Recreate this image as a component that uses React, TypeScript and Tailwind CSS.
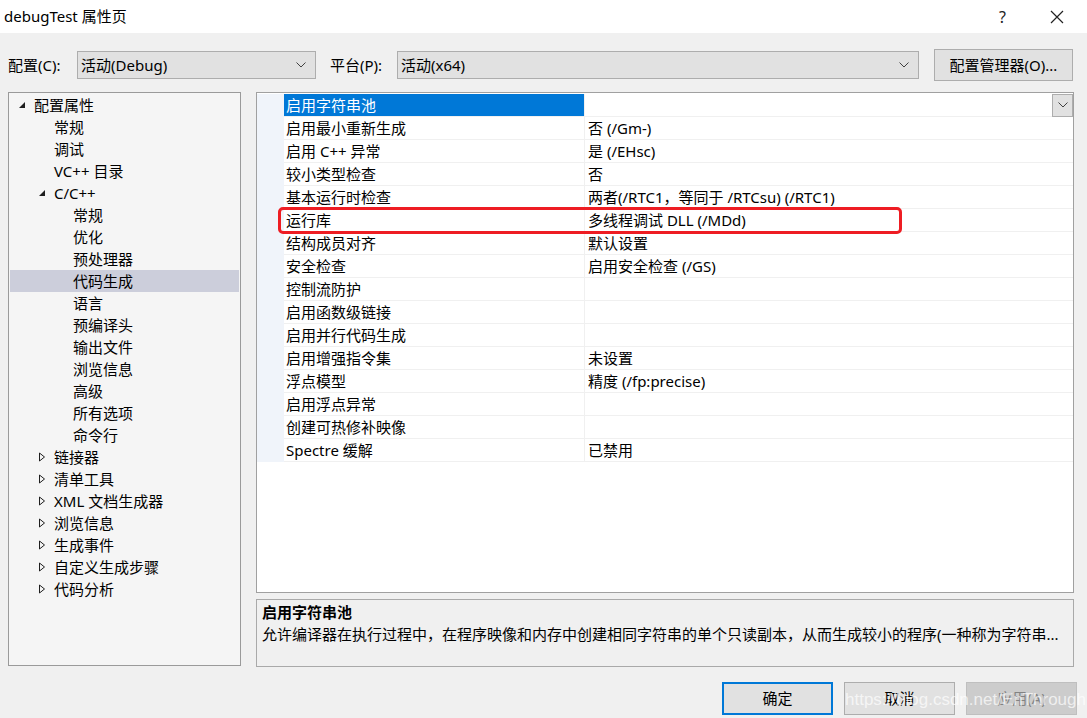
import React from 'react';

const font = "font-['Noto_Sans','Noto_Sans_CJK_SC',sans-serif]";

type TreeItem = { label: string; level: number; state?: 'open' | 'closed'; selected?: boolean };

const tree: TreeItem[] = [
  { label: '配置属性', level: 0, state: 'open' },
  { label: '常规', level: 1 },
  { label: '调试', level: 1 },
  { label: 'VC++ 目录', level: 1 },
  { label: 'C/C++', level: 1, state: 'open' },
  { label: '常规', level: 2 },
  { label: '优化', level: 2 },
  { label: '预处理器', level: 2 },
  { label: '代码生成', level: 2, selected: true },
  { label: '语言', level: 2 },
  { label: '预编译头', level: 2 },
  { label: '输出文件', level: 2 },
  { label: '浏览信息', level: 2 },
  { label: '高级', level: 2 },
  { label: '所有选项', level: 2 },
  { label: '命令行', level: 2 },
  { label: '链接器', level: 1, state: 'closed' },
  { label: '清单工具', level: 1, state: 'closed' },
  { label: 'XML 文档生成器', level: 1, state: 'closed' },
  { label: '浏览信息', level: 1, state: 'closed' },
  { label: '生成事件', level: 1, state: 'closed' },
  { label: '自定义生成步骤', level: 1, state: 'closed' },
  { label: '代码分析', level: 1, state: 'closed' },
];

const props: [string, string][] = [
  ['启用字符串池', ''],
  ['启用最小重新生成', '否 (/Gm-)'],
  ['启用 C++ 异常', '是 (/EHsc)'],
  ['较小类型检查', '否'],
  ['基本运行时检查', '两者(/RTC1，等同于 /RTCsu) (/RTC1)'],
  ['运行库', '多线程调试 DLL (/MDd)'],
  ['结构成员对齐', '默认设置'],
  ['安全检查', '启用安全检查 (/GS)'],
  ['控制流防护', ''],
  ['启用函数级链接', ''],
  ['启用并行代码生成', ''],
  ['启用增强指令集', '未设置'],
  ['浮点模型', '精度 (/fp:precise)'],
  ['启用浮点异常', ''],
  ['创建可热修补映像', ''],
  ['Spectre 缓解', '已禁用'],
];

const Chevron = () => (
  <svg width="10" height="6" viewBox="0 0 10 6" className="shrink-0">
    <path d="M0.5 0.5 L5 5 L9.5 0.5" fill="none" stroke="#404040" strokeWidth="1" />
  </svg>
);

const Expander = ({ state }: { state?: 'open' | 'closed' }) => {
  if (state === 'open')
    return (
      <svg width="8" height="8" viewBox="0 0 8 8">
        <path d="M7 1 L7 7 L1 7 Z" fill="#1e1e1e" />
      </svg>
    );
  if (state === 'closed')
    return (
      <svg width="8" height="10" viewBox="0 0 8 10">
        <path d="M1.5 1 L6.5 5 L1.5 9 Z" fill="none" stroke="#1e1e1e" strokeWidth="1" />
      </svg>
    );
  return null;
};

const Combo = ({ text, className }: { text: string; className: string }) => (
  <div className={`h-[28px] bg-[#e1e1e1] border border-[#adadad] flex items-center justify-between pl-[3px] pr-[9px] ${className}`}>
    <span>{text}</span>
    <Chevron />
  </div>
);

export default function App() {
  return (
    <div className={`w-[1087px] h-[718px] bg-[#f0f0f0] text-[15px] text-black flex flex-col overflow-hidden ${font}`}>
      {/* title bar */}
      <div className="h-[33px] bg-white flex items-center pl-[4px] shrink-0">
        <span className="flex-1">debugTest 属性页</span>
        <span className="text-[16px] mr-[44px] text-[#222]">?</span>
        <svg width="14" height="14" viewBox="0 0 14 14" className="mr-[23px]">
          <path d="M1 1 L13 13 M13 1 L1 13" stroke="#222" strokeWidth="1.2" />
        </svg>
      </div>

      {/* configuration row */}
      <div className="flex items-center mt-[16px] pl-[8px] h-[32px] shrink-0">
        <span className="w-[69px]">配置(C):</span>
        <Combo text="活动(Debug)" className="w-[239px]" />
        <span className="ml-[14px] w-[67px]">平台(P):</span>
        <Combo text="活动(x64)" className="w-[522px]" />
        <div className="ml-[15px] w-[139px] h-[32px] bg-[#e1e1e1] border border-[#adadad] flex items-center justify-center">
          配置管理器(O)...
        </div>
      </div>

      {/* main area */}
      <div className="flex mt-[11px] pl-[8px] gap-[15px] h-[575px] shrink-0">
        <div className="w-[233px] h-[574px] bg-[#f5f5f5] border border-[#9a9a9a] pt-[1px] px-[1px]">
          {tree.map((t, i) => (
            <div
              key={i}
              className={`h-[22px] flex items-center ${t.selected ? 'bg-[#cccedb]' : ''}`}
            >
              <div
                className={`w-[9px] flex justify-start ${t.level === 0 ? 'ml-[8px]' : t.level === 1 ? 'ml-[28px]' : 'ml-[47px]'}`}
              >
                <Expander state={t.state} />
              </div>
              <span className="ml-[7px]">{t.label}</span>
            </div>
          ))}
        </div>

        <div className="w-[818px] flex flex-col gap-[6px]">
          <div className="relative h-[501px] bg-white border border-[#a0a0a0] pt-[1px]">
            {props.map(([name, value], i) => (
              <div key={i} className="flex h-[23px]">
                <div className="w-[27px] bg-[#f0f4fa]" />
                <div
                  className={`w-[301px] border-b border-r border-[#f0f0f0] flex items-center pl-[2px] ${i === 0 ? 'bg-[#0078d7] text-white border-[#0078d7]' : ''}`}
                >
                  {name}
                </div>
                <div className="flex-1 border-b border-[#f0f0f0] flex items-center pl-[3px] justify-between">
                  <span>{value}</span>
                  {i === 0 && (
                    <div className="w-[21px] h-[23px] bg-[#e1e1e1] border border-[#adadad] flex items-center justify-center">
                      <Chevron />
                    </div>
                  )}
                </div>
              </div>
            ))}
            <div className="absolute left-[21px] top-[114px] w-[624px] h-[27px] border-[3px] border-[#ee1d23] rounded-[5px]" />
          </div>

          <div className="h-[68px] bg-[#f0f0f0] border border-[#a9a9a9] px-[5px] pt-[1px]">
            <div className="font-bold h-[22px] flex items-center">启用字符串池</div>
            <div className="h-[23px] flex items-center whitespace-nowrap overflow-hidden">
              允许编译器在执行过程中，在程序映像和内存中创建相同字符串的单个只读副本，从而生成较小的程序(一种称为字符串...
            </div>
          </div>
        </div>
      </div>

      {/* footer buttons */}
      <div className="relative flex justify-end gap-[11px] pr-[10px] mt-[15px]">
        <div className="w-[111px] h-[33px] bg-[#e1e1e1] border-2 border-[#0078d7] flex items-center justify-center">确定</div>
        <div className="w-[111px] h-[33px] bg-[#e1e1e1] border border-[#adadad] flex items-center justify-center">取消</div>
        <div className="w-[111px] h-[33px] bg-[#cccccc] border border-[#bfbfbf] flex items-center justify-center text-[#838383]">应用(A)</div>
        <span className="absolute left-[845px] top-[5px] text-[17px] font-['Liberation_Sans',sans-serif] text-white/70 pointer-events-none whitespace-nowrap">
          https://blog.csdn.net/EnThrough
        </span>
      </div>
    </div>
  );
}
